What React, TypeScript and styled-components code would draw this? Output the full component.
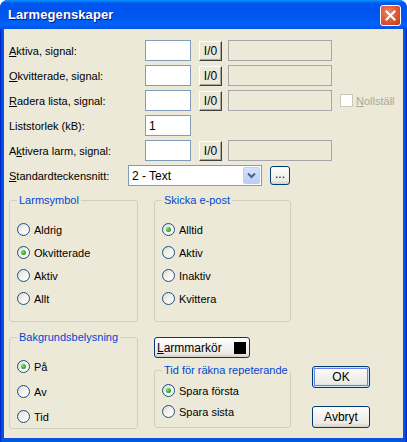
import styled, { createGlobalStyle } from "styled-components";

const GlobalStyle = createGlobalStyle`
  html, body {
    margin: 0;
    padding: 0;
    background: #ffffff;
  }
  body {
    font-family: "Liberation Sans", Arial, sans-serif;
    font-size: 11px;
    color: #000000;
  }
`;

const Window = styled.div`
  width: 407px;
  height: 442px;
  display: flex;
  flex-direction: column;
  background: linear-gradient(90deg, #0019cf 0px, #0855dd 2px, #0855dd 405px, #0019cf 407px);
  border-radius: 8px 8px 0 0;
  overflow: hidden;
`;

const TitleBar = styled.div`
  height: 29px;
  flex: none;
  display: flex;
  align-items: center;
  justify-content: space-between;
  padding: 0 6px 0 8px;
  background: linear-gradient(
    180deg,
    #0997ff 0px,
    #0058ee 3px,
    #0053ee 9px,
    #0058f0 18px,
    #0063fa 25px,
    #0050e0 29px
  );
`;

const Title = styled.span`
  color: #ffffff;
  font-family: "Liberation Sans", Arial, sans-serif;
  font-weight: bold;
  font-size: 13px;
  letter-spacing: 0.1px;
  text-shadow: 1px 1px 0 #0a1883;
`;

const CloseButton = styled.div`
  width: 19px;
  height: 19px;
  border: 1px solid #ffffff;
  border-radius: 3px;
  display: flex;
  align-items: center;
  justify-content: center;
  background: radial-gradient(circle at 40% 35%, #ec8a6c 0%, #e35d38 45%, #c2381a 100%);
  margin-top: 2px;
`;

const Client = styled.div`
  flex: 1;
  margin: 0 4px 4px;
  background: #ece9d8;
  padding: 11px 0 0 5px;
  display: flex;
  flex-direction: column;
`;

const Row = styled.div`
  display: flex;
  align-items: center;
  height: 21px;
  margin-bottom: 4px;
`;

const Label = styled.span<{ $w: number }>`
  width: ${(p) => p.$w}px;
  flex: none;
  white-space: nowrap;
`;

const TextBox = styled.div`
  width: 46px;
  height: 21px;
  box-sizing: border-box;
  border: 1px solid #7f9db9;
  background: #ffffff;
  padding: 3px 3px 0;
  font-size: 12px;
`;

const ClassicButton = styled.div`
  margin-left: 8px;
  width: 23px;
  height: 20px;
  box-sizing: border-box;
  border-top: 1px solid #ffffff;
  border-left: 1px solid #ffffff;
  border-right: 1px solid #404040;
  border-bottom: 1px solid #404040;
  box-shadow: inset -1px -1px 0 #aca899;
  background: #ece9d8;
  display: flex;
  align-items: center;
  justify-content: center;
  font-size: 12px;
`;

const DisabledBox = styled.div`
  margin-left: 6px;
  width: 104px;
  height: 21px;
  box-sizing: border-box;
  border: 1px solid #a7a6aa;
  background: #ece9d8;
`;

const CheckLabel = styled.label`
  margin-left: 8px;
  display: flex;
  align-items: center;
  color: #aca899;
`;

const CheckBox = styled.span`
  width: 13px;
  height: 13px;
  box-sizing: border-box;
  border: 1px solid #cac8bb;
  background: #ffffff;
  margin-right: 3px;
`;

const Combo = styled.div`
  width: 134px;
  height: 21px;
  box-sizing: border-box;
  border: 1px solid #7f9db9;
  background: #ffffff;
  display: flex;
  align-items: center;
  justify-content: space-between;
  padding: 1px;
  font-size: 12px;
`;

const ComboText = styled.span`
  padding-left: 2px;
`;

const ComboArrow = styled.div`
  width: 17px;
  height: 17px;
  box-sizing: border-box;
  border: 1px solid #bccdf7;
  border-radius: 2px;
  background: linear-gradient(180deg, #d6e3fd 0%, #b9cdf8 100%);
  display: flex;
  align-items: center;
  justify-content: center;
`;

const XPButton = styled.div<{ $w: number; $h: number; $default?: boolean }>`
  width: ${(p) => p.$w}px;
  height: ${(p) => p.$h}px;
  box-sizing: border-box;
  border: 1px solid #003c74;
  border-radius: 3px;
  background: linear-gradient(180deg, #ffffff 0%, #f4f3ee 40%, #ecebe6 80%, #d6d0c5 100%);
  box-shadow: ${(p) =>
    p.$default ? "inset 0 0 0 1px #cee7ff, inset 0 0 0 2px #6982ee" : "none"};
  display: flex;
  align-items: center;
  justify-content: center;
  font-size: 12px;
  flex: none;
`;

const MoreButton = styled(XPButton)`
  margin-left: 8px;
  padding-bottom: 4px;
`;

const ColorButton = styled(XPButton)`
  justify-content: space-between;
  padding: 0 3px 0 2px;
`;

const Swatch = styled.span`
  width: 12px;
  height: 12px;
  background: #000000;
`;

const GroupRow = styled.div<{ $mt: number }>`
  display: flex;
  margin-top: ${(p) => p.$mt}px;
`;

const Group = styled.fieldset<{ $w: number; $pt: number; $pb: number; $gap: number }>`
  width: ${(p) => p.$w}px;
  box-sizing: border-box;
  margin: 0;
  min-width: 0;
  border: 1px solid #d0d0bf;
  border-radius: 3px;
  padding: ${(p) => `${p.$pt}px 0 ${p.$pb}px 7px`};
  display: flex;
  flex-direction: column;
  gap: ${(p) => p.$gap}px;
  flex: none;
`;

const Legend = styled.legend`
  color: #0046d5;
  padding: 0 2px;
  margin-left: 0;
  line-height: 14px;
  font-size: 11px;
  white-space: nowrap;
`;

const RadioItem = styled.label`
  display: flex;
  align-items: center;
  height: 13px;
  font-size: 11px;
  white-space: nowrap;
`;

const RadioCircle = styled.span<{ $checked?: boolean }>`
  width: 13px;
  height: 13px;
  box-sizing: border-box;
  border: 1px solid #1c5180;
  border-radius: 50%;
  background: linear-gradient(135deg, #dcd9cf 0%, #f4f3ee 50%, #ffffff 100%);
  margin-right: 4px;
  display: flex;
  align-items: center;
  justify-content: center;
  flex: none;

  &::after {
    content: "";
    display: ${(p) => (p.$checked ? "block" : "none")};
    width: 5px;
    height: 5px;
    border-radius: 50%;
    background: radial-gradient(circle at 35% 35%, #7de37d 0%, #21a121 70%);
  }
`;

const Column = styled.div<{ $ml: number }>`
  display: flex;
  flex-direction: column;
  margin-left: ${(p) => p.$ml}px;
  flex: none;
`;

const Radio = ({ label, checked }: { label: string; checked?: boolean }) => (
  <RadioItem>
    <RadioCircle $checked={checked} />
    {label}
  </RadioItem>
);

const SignalRow = ({ children }: { children: React.ReactNode }) => (
  <Row>
    <Label $w={136}>{children}</Label>
    <TextBox />
    <ClassicButton>I/0</ClassicButton>
    <DisabledBox />
  </Row>
);

export default function App() {
  return (
    <>
      <GlobalStyle />
      <Window>
        <TitleBar>
          <Title>Larmegenskaper</Title>
          <CloseButton>
            <svg width="11" height="11" viewBox="0 0 11 11">
              <path d="M1.5 1.5 L9.5 9.5 M9.5 1.5 L1.5 9.5" stroke="#ffffff" strokeWidth="2" strokeLinecap="square" />
            </svg>
          </CloseButton>
        </TitleBar>
        <Client>
          <SignalRow>
            <u>A</u>ktiva, signal:
          </SignalRow>
          <SignalRow>
            <u>O</u>kvitterade, signal:
          </SignalRow>
          <Row>
            <Label $w={136}>
              <u>R</u>adera lista, signal:
            </Label>
            <TextBox />
            <ClassicButton>I/0</ClassicButton>
            <DisabledBox />
            <CheckLabel>
              <CheckBox />
              <span>
                <u>N</u>ollställ
              </span>
            </CheckLabel>
          </Row>
          <Row>
            <Label $w={136}>Liststorlek (kB):</Label>
            <TextBox>1</TextBox>
          </Row>
          <SignalRow>
            A<u>k</u>tivera larm, signal:
          </SignalRow>
          <Row>
            <Label $w={119}>
              <u>S</u>tandardteckensnitt:
            </Label>
            <Combo>
              <ComboText>2 - Text</ComboText>
              <ComboArrow>
                <svg width="9" height="7" viewBox="0 0 9 7">
                  <path d="M1 1.5 L4.5 5 L8 1.5" fill="none" stroke="#4d6185" strokeWidth="2" />
                </svg>
              </ComboArrow>
            </Combo>
            <MoreButton $w={20} $h={19}>...</MoreButton>
          </Row>

          <GroupRow $mt={3}>
            <Group $w={129} $pt={16} $pb={16} $gap={10}>
              <Legend>Larmsymbol</Legend>
              <Radio label="Aldrig" />
              <Radio label="Okvitterade" checked />
              <Radio label="Aktiv" />
              <Radio label="Allt" />
            </Group>
            <Group $w={137} $pt={16} $pb={16} $gap={10} style={{ marginLeft: 16 }}>
              <Legend>Skicka e-post</Legend>
              <Radio label="Alltid" checked />
              <Radio label="Aktiv" />
              <Radio label="Inaktiv" />
              <Radio label="Kvittera" />
            </Group>
          </GroupRow>

          <GroupRow $mt={8}>
            <Group $w={129} $pt={16} $pb={5} $gap={12}>
              <Legend>Bakgrundsbelysning</Legend>
              <Radio label="På" checked />
              <Radio label="Av" />
              <Radio label="Tid" />
            </Group>
            <Column $ml={16}>
              <ColorButton $w={96} $h={21} style={{ marginTop: 7 }}>
                <span>
                  <u>L</u>armmarkör
                </span>
                <Swatch />
              </ColorButton>
              <Group $w={137} $pt={7} $pb={9} $gap={8} style={{ marginTop: 5 }}>
                <Legend>Tid för räkna repeterande</Legend>
                <Radio label="Spara första" checked />
                <Radio label="Spara sista" />
              </Group>
            </Column>
            <Column $ml={21}>
              <XPButton $w={58} $h={22} $default style={{ marginTop: 36 }}>
                OK
              </XPButton>
              <XPButton $w={58} $h={22} style={{ marginTop: 18 }}>
                Avbryt
              </XPButton>
            </Column>
          </GroupRow>
        </Client>
      </Window>
    </>
  );
}
